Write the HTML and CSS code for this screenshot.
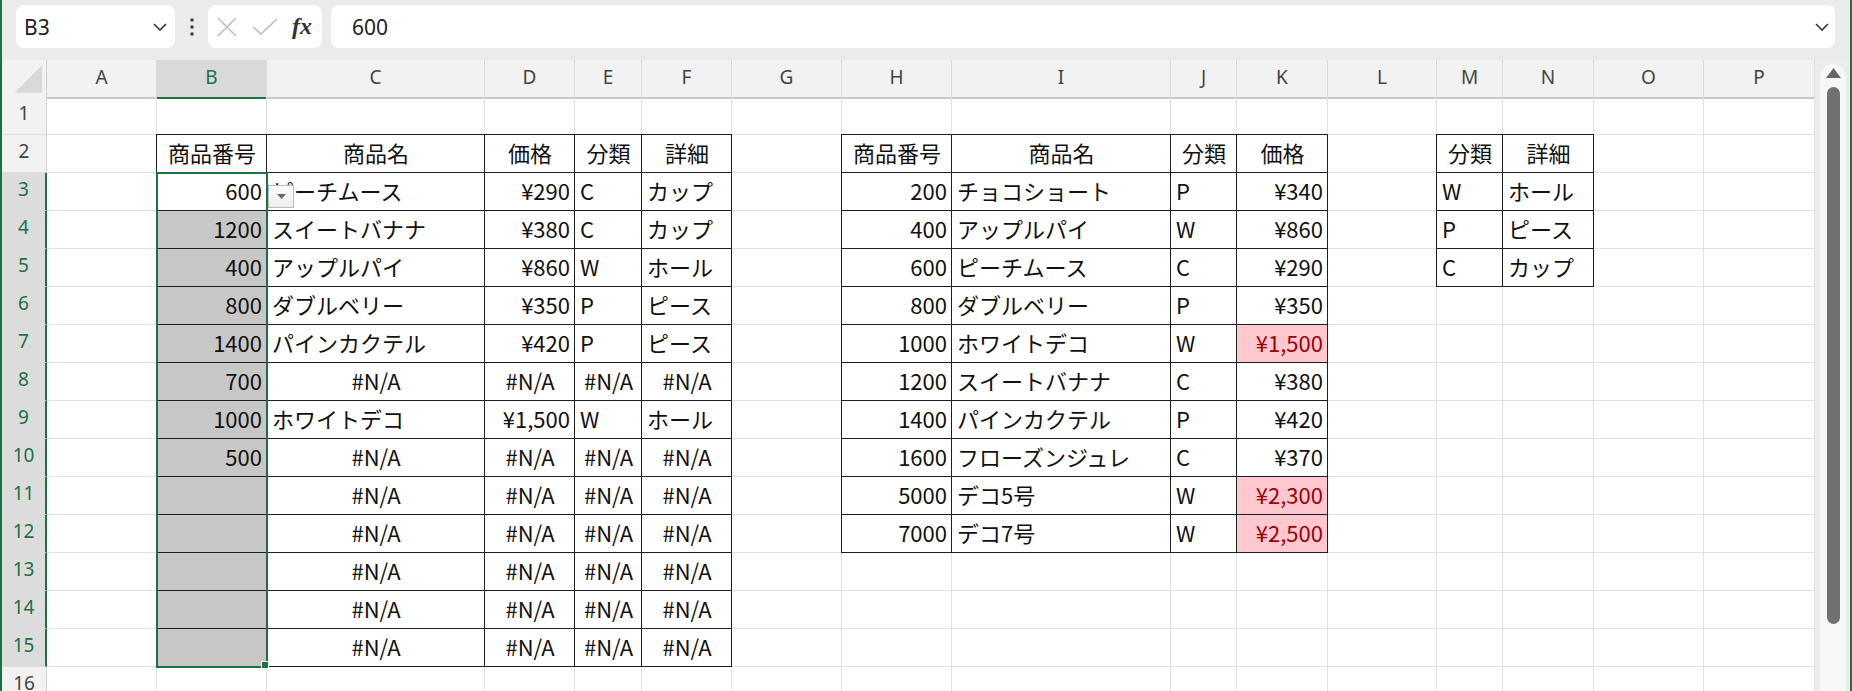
FILE: index.html
```html
<!DOCTYPE html>
<html lang="ja">
<head>
  <meta charset="UTF-8">
  <title>Book1 - Excel</title>
  <link rel="stylesheet" href="styles.css">
</head>
<body>
<div class="window">

  <!-- formula bar -->
  <div class="formula-bar">
    <div class="name-box">
      <span>B3</span>
      <svg width="14" height="8" viewBox="0 0 14 8"><path d="M1 1l6 6 6-6" fill="none" stroke="#333" stroke-width="1.6"/></svg>
    </div>
    <div class="dots">
      <svg width="4" height="18" viewBox="0 0 4 18"><circle cx="2" cy="2" r="1.8"/><circle cx="2" cy="9" r="1.8"/><circle cx="2" cy="16" r="1.8"/></svg>
    </div>
    <div class="fx-box">
      <svg width="20" height="20" viewBox="0 0 20 20"><path d="M1 1l18 18M19 1L1 19" stroke="#bdbdbd" stroke-width="1.6"/></svg>
      <svg width="26" height="17" viewBox="0 0 26 17"><path d="M1 9l8 7L25 1" fill="none" stroke="#bdbdbd" stroke-width="1.6"/></svg>
      <span class="fx">fx</span>
    </div>
    <div class="formula-input">
      <span>600</span>
      <svg width="14" height="8" viewBox="0 0 14 8"><path d="M1 1l6 6 6-6" fill="none" stroke="#333" stroke-width="1.6"/></svg>
    </div>
  </div>

  <div class="sheet-area">
    <div class="sheet">
      <!-- column headers -->
      <div class="colhead">
        <div class="corner"><svg width="45" height="37" viewBox="0 0 45 37"><polygon points="13,33 41,33 41,5" fill="#d9d9d9"/></svg></div>
        <div>A</div><div class="on">B</div><div>C</div><div>D</div><div>E</div><div>F</div><div>G</div><div>H</div>
        <div>I</div><div>J</div><div>K</div><div>L</div><div>M</div><div>N</div><div>O</div><div>P</div>
      </div>

      <div class="body">
        <div class="cells">
          <!-- 1 -->
          <div class="rh">1</div><div></div><div></div><div></div><div></div><div></div><div></div><div></div>
          <div></div><div></div><div></div><div></div><div></div><div></div><div></div><div></div><div></div>
          <!-- 2 -->
          <div class="rh">2</div><div></div>
          <div class="b bl bt m">商品番号</div><div class="b bt m">商品名</div><div class="b bt m">価格</div><div class="b bt m">分類</div><div class="b bt m">詳細</div>
          <div></div>
          <div class="b bl bt m">商品番号</div><div class="b bt m">商品名</div><div class="b bt m">分類</div><div class="b bt m">価格</div>
          <div></div>
          <div class="b bl bt m">分類</div><div class="b bt m">詳細</div>
          <div></div><div></div>
          <!-- 3 -->
          <div class="rh on">3</div><div></div>
          <div class="b bl r">600</div><div class="b">ピーチムース</div><div class="b r">¥290</div><div class="b">C</div><div class="b">カップ</div>
          <div></div>
          <div class="b bl r">200</div><div class="b">チョコショート</div><div class="b">P</div><div class="b r">¥340</div>
          <div></div>
          <div class="b bl">W</div><div class="b">ホール</div>
          <div></div><div></div>
          <!-- 4 -->
          <div class="rh on">4</div><div></div>
          <div class="b bl r g">1200</div><div class="b">スイートバナナ</div><div class="b r">¥380</div><div class="b">C</div><div class="b">カップ</div>
          <div></div>
          <div class="b bl r">400</div><div class="b">アップルパイ</div><div class="b">W</div><div class="b r">¥860</div>
          <div></div>
          <div class="b bl">P</div><div class="b">ピース</div>
          <div></div><div></div>
          <!-- 5 -->
          <div class="rh on">5</div><div></div>
          <div class="b bl r g">400</div><div class="b">アップルパイ</div><div class="b r">¥860</div><div class="b">W</div><div class="b">ホール</div>
          <div></div>
          <div class="b bl r">600</div><div class="b">ピーチムース</div><div class="b">C</div><div class="b r">¥290</div>
          <div></div>
          <div class="b bl">C</div><div class="b">カップ</div>
          <div></div><div></div>
          <!-- 6 -->
          <div class="rh on">6</div><div></div>
          <div class="b bl r g">800</div><div class="b">ダブルベリー</div><div class="b r">¥350</div><div class="b">P</div><div class="b">ピース</div>
          <div></div>
          <div class="b bl r">800</div><div class="b">ダブルベリー</div><div class="b">P</div><div class="b r">¥350</div>
          <div></div><div></div><div></div><div></div><div></div>
          <!-- 7 -->
          <div class="rh on">7</div><div></div>
          <div class="b bl r g">1400</div><div class="b">パインカクテル</div><div class="b r">¥420</div><div class="b">P</div><div class="b">ピース</div>
          <div></div>
          <div class="b bl r">1000</div><div class="b">ホワイトデコ</div><div class="b">W</div><div class="b r p">¥1,500</div>
          <div></div><div></div><div></div><div></div><div></div>
          <!-- 8 -->
          <div class="rh on">8</div><div></div>
          <div class="b bl r g">700</div><div class="b m">#N/A</div><div class="b m">#N/A</div><div class="b m">#N/A</div><div class="b m">#N/A</div>
          <div></div>
          <div class="b bl r">1200</div><div class="b">スイートバナナ</div><div class="b">C</div><div class="b r">¥380</div>
          <div></div><div></div><div></div><div></div><div></div>
          <!-- 9 -->
          <div class="rh on">9</div><div></div>
          <div class="b bl r g">1000</div><div class="b">ホワイトデコ</div><div class="b r">¥1,500</div><div class="b">W</div><div class="b">ホール</div>
          <div></div>
          <div class="b bl r">1400</div><div class="b">パインカクテル</div><div class="b">P</div><div class="b r">¥420</div>
          <div></div><div></div><div></div><div></div><div></div>
          <!-- 10 -->
          <div class="rh on">10</div><div></div>
          <div class="b bl r g">500</div><div class="b m">#N/A</div><div class="b m">#N/A</div><div class="b m">#N/A</div><div class="b m">#N/A</div>
          <div></div>
          <div class="b bl r">1600</div><div class="b">フローズンジュレ</div><div class="b">C</div><div class="b r">¥370</div>
          <div></div><div></div><div></div><div></div><div></div>
          <!-- 11 -->
          <div class="rh on">11</div><div></div>
          <div class="b bl g"></div><div class="b m">#N/A</div><div class="b m">#N/A</div><div class="b m">#N/A</div><div class="b m">#N/A</div>
          <div></div>
          <div class="b bl r">5000</div><div class="b">デコ5号</div><div class="b">W</div><div class="b r p">¥2,300</div>
          <div></div><div></div><div></div><div></div><div></div>
          <!-- 12 -->
          <div class="rh on">12</div><div></div>
          <div class="b bl g"></div><div class="b m">#N/A</div><div class="b m">#N/A</div><div class="b m">#N/A</div><div class="b m">#N/A</div>
          <div></div>
          <div class="b bl r">7000</div><div class="b">デコ7号</div><div class="b">W</div><div class="b r p">¥2,500</div>
          <div></div><div></div><div></div><div></div><div></div>
          <!-- 13 -->
          <div class="rh on">13</div><div></div>
          <div class="b bl g"></div><div class="b m">#N/A</div><div class="b m">#N/A</div><div class="b m">#N/A</div><div class="b m">#N/A</div>
          <div></div><div></div><div></div><div></div><div></div><div></div><div></div><div></div><div></div><div></div>
          <!-- 14 -->
          <div class="rh on">14</div><div></div>
          <div class="b bl g"></div><div class="b m">#N/A</div><div class="b m">#N/A</div><div class="b m">#N/A</div><div class="b m">#N/A</div>
          <div></div><div></div><div></div><div></div><div></div><div></div><div></div><div></div><div></div><div></div>
          <!-- 15 -->
          <div class="rh on">15</div><div></div>
          <div class="b bl g"></div><div class="b m">#N/A</div><div class="b m">#N/A</div><div class="b m">#N/A</div><div class="b m">#N/A</div>
          <div></div><div></div><div></div><div></div><div></div><div></div><div></div><div></div><div></div><div></div>
          <!-- 16 -->
          <div class="rh">16</div><div></div><div></div><div></div><div></div><div></div><div></div><div></div>
          <div></div><div></div><div></div><div></div><div></div><div></div><div></div><div></div><div></div>
        </div>

        <!-- selection and in-cell controls -->
        <div class="marks">
          <div class="selection"><span class="handle"></span></div>
          <div class="dd">
            <svg width="9" height="5" viewBox="0 0 9 5"><polygon points="0,0 9,0 4.5,5" fill="#666"/></svg>
          </div>
        </div>
      </div>
    </div>

    <div class="vscroll">
      <div class="track">
        <svg width="15" height="10" viewBox="0 0 15 10"><polygon points="7.5,0 15,10 0,10" fill="#666"/></svg>
        <div class="thumb"></div>
      </div>
    </div>
  </div>

</div>
</body>
</html>
```

FILE: styles.css
```css
:root {
  --cols: 45px 110px 110px 218px 90px 67px 90px 110px 110px 219px 66px 91px 109px 66px 91px 110px 111px;
  --green: #1e7145;
  --ink: #1f1f1f;
  --grid: #e1e1e1;
}

body {
  margin: 0;
  width: 1852px;
  height: 691px;
  overflow: hidden;
  font-family: "Noto Sans", "Liberation Sans", sans-serif;
}

.window {
  height: 691px;
  box-sizing: border-box;
  border-left: 2px solid var(--green);
  border-right: 2px solid var(--green);
  background: #ebebeb;
  display: flex;
  flex-direction: column;
  overflow: hidden;
}

/* formula bar */
.formula-bar {
  height: 60px;
  flex: none;
  box-sizing: border-box;
  padding: 5px 15px 0 14px;
  display: flex;
  align-items: flex-start;
}

.name-box, .fx-box, .formula-input {
  height: 43px;
  background: #fff;
  border-radius: 8px;
  display: flex;
  align-items: center;
  box-sizing: border-box;
}

.name-box {
  width: 159px;
  padding: 0 8px;
  justify-content: space-between;
  font-size: 21px;
  color: #222;
}

.dots {
  width: 33px;
  height: 43px;
  display: flex;
  align-items: center;
  justify-content: center;
  fill: #404040;
}

.fx-box {
  width: 114px;
  padding-left: 9px;
  gap: 15px;
  margin-right: 9px;
}

.fx {
  font-family: "Liberation Serif", serif;
  font-style: italic;
  font-weight: bold;
  font-size: 24px;
  color: #333;
  margin-left: -1px;
}

.formula-input {
  flex: 1;
  padding: 0 6px 0 21px;
  justify-content: space-between;
  font-size: 21px;
  color: #222;
}

/* sheet */
.sheet-area {
  flex: 1;
  min-height: 0;
  display: flex;
}

.sheet {
  width: 1813px;
  background: #fff;
}

.colhead {
  display: grid;
  grid-template-columns: var(--cols);
  height: 37px;
  background: #f2f2f2;
}

.colhead > div {
  box-sizing: border-box;
  border-right: 1px solid #dcdcdc;
  border-bottom: 2px solid #c9c9c9;
  padding-bottom: 3px;
  display: flex;
  align-items: center;
  justify-content: center;
  font-size: 19px;
  color: #444;
}

.colhead > .corner {
  align-items: stretch;
  padding-bottom: 0;
  border-right-color: #d0d0d0;
}

.colhead > .on {
  background: #d9d9d9;
  color: var(--green);
  border-bottom-color: var(--green);
}

.body {
  display: grid;
}

.cells, .marks {
  grid-area: 1 / 1;
  display: grid;
  grid-template-columns: var(--cols);
  grid-auto-rows: 38px;
}

.cells > div {
  box-sizing: border-box;
  border-right: 1px solid var(--grid);
  border-bottom: 1px solid var(--grid);
  padding: 0 4px 3px 5px;
  display: flex;
  align-items: center;
  white-space: nowrap;
  overflow: hidden;
  font-family: "Noto Sans CJK JP", "Noto Sans", sans-serif;
  font-size: 22px;
  line-height: 1;
  color: #111;
}

.cells > .rh {
  background: #f2f2f2;
  justify-content: center;
  padding: 0 0 5px;
  font-family: "Noto Sans", "Liberation Sans", sans-serif;
  font-size: 19px;
  color: #444;
  border-right-color: #d0d0d0;
  border-bottom-color: #dcdcdc;
}

.cells > .rh.on {
  background: #dcdcdc;
  color: var(--green);
  border-right: 2px solid var(--green);
}

/* bordered table cells */
.cells > .b {
  border-right-color: var(--ink);
  border-bottom-color: var(--ink);
}

.cells > .bl { box-shadow: -1px 0 0 var(--ink); }
.cells > .bt { box-shadow: 0 -1px 0 var(--ink); }
.cells > .bl.bt { box-shadow: -1px 0 0 var(--ink), 0 -1px 0 var(--ink), -1px -1px 0 var(--ink); }

.cells > .r { justify-content: flex-end; }
.cells > .m { justify-content: center; }
.cells > .g { background: #c7c7c7; }
.cells > .p { background: #ffc7ce; color: #9c0006; }

/* selection overlay */
.marks {
  pointer-events: none;
}

.selection {
  grid-column: 3;
  grid-row: 3 / 16;
  margin: -1px;
  border: 2px solid var(--green);
  position: relative;
}

.handle {
  position: absolute;
  right: -3px;
  bottom: -3px;
  width: 6px;
  height: 6px;
  background: var(--green);
  border: 1px solid #fff;
}

.dd {
  grid-column: 4;
  grid-row: 3;
  align-self: start;
  justify-self: start;
  width: 26px;
  height: 23px;
  margin: 12px 0 0 1px;
  box-sizing: border-box;
  border: 1px solid #bcbcbc;
  background: linear-gradient(#ffffff, #ececec);
  display: flex;
  align-items: center;
  justify-content: center;
}

/* scrollbar */
.vscroll {
  width: 35px;
  box-sizing: border-box;
  padding: 4px 4px 0 5px;
  background: #ececec;
}

.track {
  height: 100%;
  box-sizing: border-box;
  padding-top: 4px;
  background: #f7f7f7;
  border-radius: 13px 13px 0 0;
  display: flex;
  flex-direction: column;
  align-items: center;
}

.thumb {
  width: 13px;
  height: 537px;
  margin-top: 9px;
  border-radius: 7px;
  background: #717171;
}
```
